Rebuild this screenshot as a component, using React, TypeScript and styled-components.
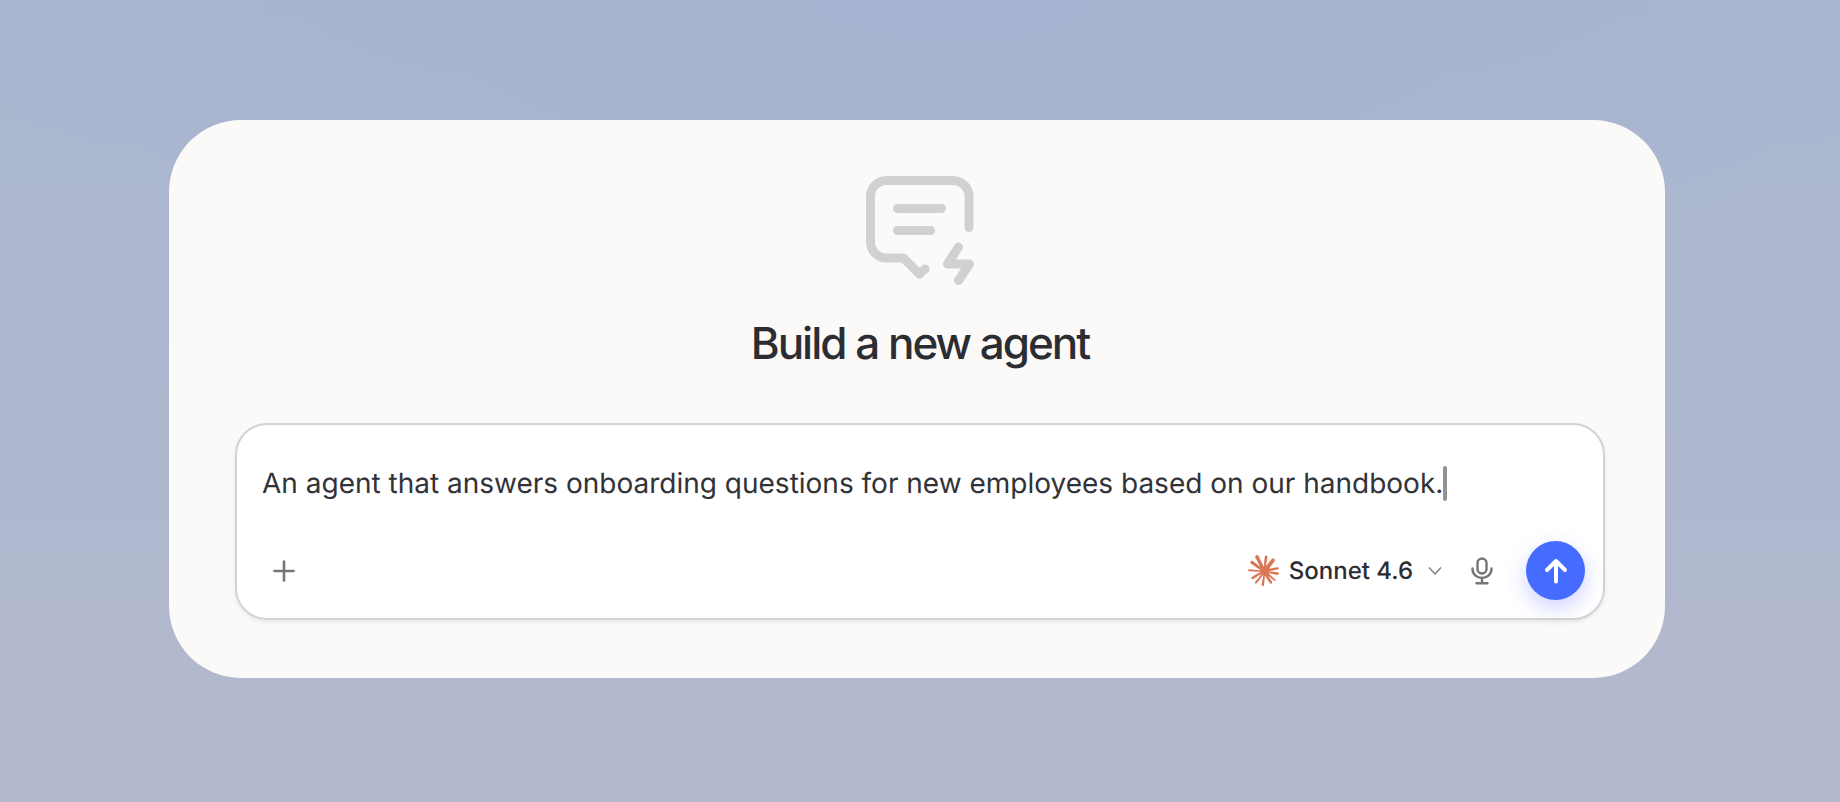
import React, { useState } from "react";
import styled, { createGlobalStyle } from "styled-components";
import { SiClaude } from "react-icons/si";

const GlobalStyle = createGlobalStyle`
  *, *::before, *::after { box-sizing: border-box; }
  body {
    margin: 0;
    font-family: Inter, "Liberation Sans", sans-serif;
    color: #2c2d33;
    text-rendering: geometricPrecision;
    -webkit-font-smoothing: antialiased;
  }
`;

const Page = styled.main`
  min-height: 100vh;
  display: flex;
  flex-direction: column;
  padding: 120px 175px 124px 169px;
  background:
    radial-gradient(ellipse 55% 40% at 52% 0%, rgba(160, 177, 207, 0.6), rgba(160, 177, 207, 0)),
    linear-gradient(180deg, #aab6d0 0%, #aeb8cf 50%, #b4b9ce 100%);
`;

const Card = styled.section`
  flex: 1;
  display: flex;
  flex-direction: column;
  align-items: center;
  padding: 56px 60px 58px 66px;
  border-radius: 72px;
  background: #fbfaf8;
`;

const AgentIcon = styled.svg`
  width: 108px;
  height: 109px;
  stroke: #d1d1d1;
  stroke-width: 9;
`;

const Title = styled.h1`
  margin: 30px 0 52px;
  font-size: 44px;
  line-height: 56px;
  font-weight: 500;
  letter-spacing: -2px;
`;

const Composer = styled.form`
  width: 100%;
  flex: 1;
  display: flex;
  flex-direction: column;
  justify-content: space-between;
  padding: 40px 18px 18px 25px;
  border: 2px solid #d3d3d1;
  border-radius: 32px;
  background: #fff;
  box-shadow: 0 2px 4px rgba(0, 0, 0, 0.08);
`;

const PromptRow = styled.div`
  display: flex;
  align-items: center;
`;

const Prompt = styled.input`
  field-sizing: content;
  max-width: 100%;
  height: 36px;
  padding: 0;
  border: 0;
  outline: 0;
  background: transparent;
  color: #323338;
  font: 400 28px/36px Inter, "Liberation Sans", sans-serif;
  text-rendering: inherit;
`;

const Caret = styled.span`
  flex: none;
  width: 4px;
  height: 35px;
  border-radius: 2px;
  background: #939393;
`;

const Toolbar = styled.div`
  display: flex;
  align-items: center;
  justify-content: space-between;
`;

const ToolGroup = styled.div`
  display: flex;
  align-items: center;
`;

const IconButton = styled.button`
  display: grid;
  place-items: center;
  width: 44px;
  height: 44px;
  padding: 0;
  border: 0;
  background: none;
  color: #757679;
`;

const ModelButton = styled.button`
  display: flex;
  align-items: center;
  gap: 10px;
  margin-right: 18px;
  padding: 0;
  border: 0;
  background: none;
  color: inherit;
  font: 500 24px/32px Inter, "Liberation Sans", sans-serif;
  text-rendering: inherit;
`;

const Chevron = styled.svg`
  margin-left: 5px;
`;

const SendButton = styled.button`
  display: grid;
  place-items: center;
  width: 59px;
  height: 59px;
  margin-left: 22px;
  padding: 0;
  border: 0;
  border-radius: 50%;
  background: #456cff;
  color: #fff;
  box-shadow: 0 8px 20px rgba(69, 80, 255, 0.25);
`;

const lineProps = {
  fill: "none",
  stroke: "currentColor",
  strokeLinecap: "round",
  strokeLinejoin: "round",
} as const;

export default function App() {
  const [prompt, setPrompt] = useState(
    "An agent that answers onboarding questions for new employees based on our handbook."
  );

  return (
    <>
      <GlobalStyle />
      <Page>
        <Card>
          <AgentIcon viewBox="0 0 108 109" fill="none" strokeLinecap="round" strokeLinejoin="round" aria-hidden="true">
            <path d="M103 51.500V20.500a16 16 0 0 0-16-16H20.500a16 16 0 0 0-16 16V66a16 16 0 0 0 16 16H37.500L53.500 98L59 93" />
            <path d="M31.500 32.500H75.500M31.500 54.500H64.500" />
            <path d="M92.500 71L81.500 88H103.500L92.500 104.500" />
          </AgentIcon>
          <Title>Build a new agent</Title>
          <Composer onSubmit={(event) => event.preventDefault()}>
            <PromptRow>
              <Prompt
                aria-label="Describe your agent"
                value={prompt}
                onChange={(event) => setPrompt(event.target.value)}
              />
              <Caret aria-hidden="true" />
            </PromptRow>
            <Toolbar>
              <IconButton type="button" aria-label="Add attachment">
                <svg width="22" height="22" viewBox="0 0 22 22" {...lineProps} strokeWidth="2.600">
                  <path d="M11 1.500V20.500M1.500 11H20.500" />
                </svg>
              </IconButton>
              <ToolGroup>
                <ModelButton type="button">
                  <SiClaude size={31} color="#dc7554" aria-hidden="true" />
                  Sonnet 4.6
                  <Chevron width="14" height="10" viewBox="0 0 14 10" {...lineProps} stroke="#8c8d8f" strokeWidth="1.800" aria-hidden="true">
                    <path d="M1.500 2L7 8L12.500 2" />
                  </Chevron>
                </ModelButton>
                <IconButton type="button" aria-label="Dictate">
                  <svg width="22" height="28" viewBox="0 0 22 28" {...lineProps} strokeWidth="2.400">
                    <rect x="6.500" y="1.500" width="9" height="15" rx="4.500" />
                    <path d="M1.500 11.500v.5a9.500 9 0 0 0 19 0v-.5M11 21.500V26.300M5.500 26.300H16.500" />
                  </svg>
                </IconButton>
                <SendButton type="submit" aria-label="Send">
                  <svg width="24" height="26" viewBox="0 0 24 26" {...lineProps} strokeWidth="4">
                    <path d="M12 23.500V3M3 12L12 3L21 12" />
                  </svg>
                </SendButton>
              </ToolGroup>
            </Toolbar>
          </Composer>
        </Card>
      </Page>
    </>
  );
}
